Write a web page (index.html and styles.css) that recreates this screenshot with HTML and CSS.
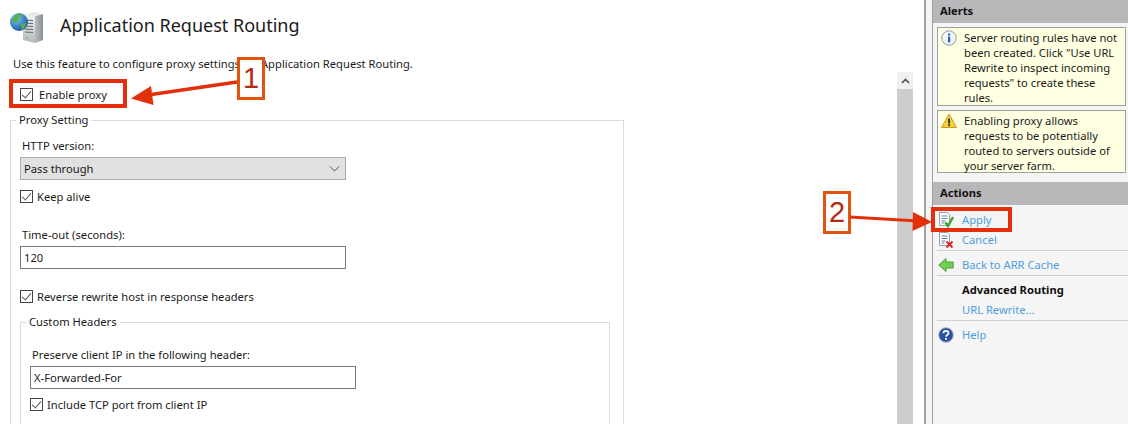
FILE: index.html
```html
<!DOCTYPE html>
<html lang="en">
<head>
    <meta charset="UTF-8">
    <meta name="viewport" content="width=device-width, initial-scale=1.0">
    <title>Application Request Routing</title>
    <link rel="stylesheet" href="styles.css">
</head>
<body>
    <div class="window">
        <main class="main">
            <div class="content">
                <div class="page-head">
                    <svg class="page-icon" width="36" height="36" viewBox="0 0 36 36">
                        <defs>
                            <linearGradient id="tower" x1="0" x2="1" y1="0" y2="0">
                                <stop offset="0" stop-color="#b9bdc0"/>
                                <stop offset="1" stop-color="#8a8f93"/>
                            </linearGradient>
                            <linearGradient id="front" x1="0" x2="0" y1="0" y2="1">
                                <stop offset="0" stop-color="#f2f3f3"/>
                                <stop offset="1" stop-color="#b4b8ba"/>
                            </linearGradient>
                            <radialGradient id="globe" cx="0.35" cy="0.3" r="0.8">
                                <stop offset="0" stop-color="#7fc8f5"/>
                                <stop offset="1" stop-color="#0f4f9e"/>
                            </radialGradient>
                        </defs>
                        <path d="M26 8l8-2v26l-8 3z" fill="url(#tower)"/>
                        <path d="M14 7l12 1v27l-12-3z" fill="url(#front)"/>
                        <path d="M14 7l12-3 8 2-8 2z" fill="#e6e8e9"/>
                        <path d="M16 12l8 .5M16 15l8 .5M16 18l8 .5M16 21l8 .5M16 24l8 .5" stroke="#5f6568" stroke-width="1"/>
                        <circle cx="18" cy="30" r="1" fill="#6fc04a"/>
                        <circle cx="10" cy="14" r="9" fill="url(#globe)"/>
                        <path d="M4 10c2-3 6-5 9-4l-1 3-3 1 1 3-4 2-3-2zM12 16l5-1-1 4-3 3z" fill="#58b04a"/>
                    </svg>
                    <h1 class="page-title">Application Request Routing</h1>
                </div>
                <p class="intro">Use this feature to configure proxy settings for Application Request Routing.</p>
                <label class="check check-top"><span class="box"></span>Enable proxy</label>

                <fieldset class="group">
                    <legend>Proxy Setting</legend>
                    <div class="field-label first">HTTP version:</div>
                    <div class="select">
                        <span>Pass through</span>
                        <svg width="11" height="6" viewBox="0 0 11 6"><path d="M1 .5l4.5 4.5L10 .5" fill="none" stroke="#555" stroke-width="1"/></svg>
                    </div>
                    <label class="check keep"><span class="box"></span>Keep alive</label>
                    <div class="field-label timeout">Time-out (seconds):</div>
                    <div class="input">120</div>
                    <label class="check reverse"><span class="box"></span>Reverse rewrite host in response headers</label>

                    <fieldset class="group inner">
                        <legend>Custom Headers</legend>
                        <div class="field-label first">Preserve client IP in the following header:</div>
                        <div class="input">X-Forwarded-For</div>
                        <label class="check keep"><span class="box"></span>Include TCP port from client IP</label>
                    </fieldset>
                </fieldset>
            </div>
            <div class="scrollbar">
                <div class="scroll-up">
                    <svg width="9" height="6" viewBox="0 0 9 6"><path d="M1 5l3.500-3.500L8 5" fill="none" stroke="#505050" stroke-width="1.600"/></svg>
                </div>
            </div>
        </main>

        <aside class="side">
            <div class="side-head">Alerts</div>
            <div class="alert alert-info">
                <svg width="16" height="16" viewBox="0 0 16 16">
                    <circle cx="8" cy="8" r="7.200" fill="#f4f6fa" stroke="#8f9aa8"/>
                    <rect x="7" y="6.500" width="2.200" height="6" fill="#2b5fc0"/>
                    <rect x="7" y="3.500" width="2.200" height="2" fill="#2b5fc0"/>
                </svg>
                <span>Server routing rules have not been created. Click "Use URL Rewrite to inspect incoming requests" to create these rules.</span>
            </div>
            <div class="alert alert-warn">
                <svg width="16" height="16" viewBox="0 0 16 16">
                    <path d="M8 1l7.500 13.500H.500z" fill="#f7d13c" stroke="#c79a1a"/>
                    <rect x="7.200" y="5.500" width="1.700" height="5" fill="#222"/>
                    <rect x="7.200" y="11.300" width="1.700" height="1.800" fill="#222"/>
                </svg>
                <span>Enabling proxy allows requests to be potentially routed to servers outside of your server farm.</span>
            </div>

            <div class="side-head actions-head">Actions</div>
            <ul class="actions">
                <li class="action first-action">
                    <svg width="16" height="16" viewBox="0 0 16 16">
                        <path d="M1.500 .5h8l2 2v11h-10z" fill="#fff" stroke="#9aa0a6"/>
                        <path d="M3.500 4h6M3.500 6.500h6M3.500 9h4M3.500 11h3" stroke="#5e86b5"/>
                        <path d="M7.500 10.500l2.500 3.500 5-9" fill="none" stroke="#3aa52c" stroke-width="2.400"/>
                    </svg>
                    <a>Apply</a>
                </li>
                <li class="action rule">
                    <svg width="16" height="16" viewBox="0 0 16 16">
                        <path d="M1.500 .5h8l2 2v11h-10z" fill="#fff" stroke="#9aa0a6"/>
                        <path d="M3.500 4h6M3.500 6.500h6M3.500 9h4M3.500 11h3" stroke="#5e86b5"/>
                        <path d="M8.500 9.500l6 6M14.500 9.500l-6 6" stroke="#d9252a" stroke-width="2"/>
                    </svg>
                    <a>Cancel</a>
                </li>
                <li class="action rule">
                    <svg width="16" height="16" viewBox="0 0 16 16">
                        <path d="M.8 8L8 1.500v3.500h7.200v6H8v3.500z" fill="#6fd04f" stroke="#4b9f3a"/>
                    </svg>
                    <a>Back to ARR Cache</a>
                </li>
                <li class="action-title">Advanced Routing</li>
                <li class="action rule no-icon"><a>URL Rewrite...</a></li>
                <li class="action">
                    <svg width="16" height="16" viewBox="0 0 16 16">
                        <circle cx="8" cy="8" r="7.300" fill="#2a50a8" stroke="#a9b3c4"/>
                        <path d="M5.500 6.200c0-3 5-3 5 0 0 1.800-2.500 1.800-2.500 3.600" fill="none" stroke="#fff" stroke-width="1.700"/>
                        <rect x="7.100" y="11" width="1.800" height="1.800" fill="#fff"/>
                    </svg>
                    <a>Help</a>
                </li>
            </ul>
        </aside>
    </div>

    <!-- Annotations drawn over the screenshot -->
    <div class="mark mark-proxy"></div>
    <div class="mark mark-apply"></div>
    <div class="num num-one">1</div>
    <div class="num num-two">2</div>
    <svg class="arrows" width="1128" height="424" viewBox="0 0 1128 424">
        <path d="M237 82L148 95" stroke="#e4300a" stroke-width="3.500"/>
        <path d="M131 98.500L151 86l2.500 19z" fill="#e4300a"/>
        <path d="M850 217L918 221" stroke="#e4300a" stroke-width="3"/>
        <path d="M932 222L913 212l-.5 19z" fill="#e4300a"/>
    </svg>
</body>
</html>
```

FILE: styles.css
```css
html, body {
    margin: 0;
    padding: 0;
    height: 424px;
    overflow: hidden;
}

body {
    font-family: "Noto Sans", Arial, sans-serif;
    font-size: 11.2px;
    color: #1a1a1a;
    background: #fff;
}

.window {
    display: flex;
    height: 424px;
}

.main {
    display: flex;
    flex-shrink: 0;
    width: 924px;
    border-right: 2px solid #a0a0a0;
}

.content {
    width: 897px;
    height: 424px;
    padding-top: 8px;
    padding-left: 10px;
    box-sizing: border-box;
    overflow: hidden;
}

.page-head {
    display: flex;
    align-items: center;
    height: 36px;
}

.page-icon {
    margin-left: -1px;
}

.page-title {
    margin: 0 0 2px 15px;
    font-size: 18px;
    font-weight: normal;
    color: #1b1b1b;
}

.intro {
    margin: 11px 0 0 3px;
    line-height: 17px;
    white-space: nowrap;
}

.check {
    display: flex;
    align-items: center;
    line-height: 17px;
}

.box {
    width: 11px;
    height: 11px;
    margin-right: 4px;
    border: 1px solid #444;
    background: #fff;
    position: relative;
}

.box::after {
    content: "";
    position: absolute;
    left: 3px;
    top: 0;
    width: 4px;
    height: 8px;
    border-right: 1px solid #555;
    border-bottom: 1px solid #555;
    transform: rotate(40deg);
}

.check-top {
    margin: 14px 0 0 10px;
}

.check-top .box {
    margin-right: 6px;
}

.group {
    width: 614px;
    margin: 8px 0 0 0;
    padding: 0 0 0 9px;
    border: 1px solid #dcdcdc;
    box-sizing: border-box;
    min-inline-size: 0;
}

.group legend {
    margin-left: -4px;
    padding: 0 3px 2px;
    line-height: 17px;
}

.field-label {
    margin-left: 2px;
    line-height: 17px;
}

.field-label.first {
    margin-top: 7px;
}

.select, .input {
    display: flex;
    align-items: center;
    width: 326px;
    height: 23px;
    box-sizing: border-box;
    padding: 0 3px;
}

.select {
    justify-content: space-between;
    margin-top: 3px;
    padding-right: 5px;
    background: #e1e1e1;
    border: 1px solid #adadad;
}

.input {
    margin-top: 3px;
    background: #fff;
    border: 1px solid #7a7a7a;
}

.keep {
    margin-top: 8px;
}

.timeout {
    margin-top: 21px;
}

.reverse {
    margin-top: 19px;
}

.group.inner {
    width: 590px;
    height: 200px;
    margin: 8px 0 0 0;
}

.inner .field-label.first {
    margin-top: 14px;
}

.inner .keep {
    margin-top: 7px;
}

.scrollbar {
    width: 16px;
    margin-top: 72px;
    background: #cdcdcd;
}

.scroll-up {
    display: flex;
    align-items: center;
    justify-content: center;
    height: 17px;
    background: #f0f0f0;
}

.side {
    flex: 1;
    margin-left: 6px;
    border-left: 1px solid #a0a0a0;
    background: #f5f5f5;
    box-shadow: -6px 0 0 #f5f5f5;
}

.side-head {
    height: 23px;
    padding-left: 7px;
    line-height: 21px;
    font-weight: bold;
    color: #111;
    background: #b9b7b9;
}

.alert {
    display: flex;
    gap: 7px;
    width: 189px;
    margin: 4px 0 0 4px;
    padding: 2px 3px 0 3px;
    box-sizing: border-box;
    line-height: 15px;
    background: #ffffe1;
    border: 1px solid #a0a0a0;
}

.alert svg {
    flex-shrink: 0;
}

.alert-info {
    height: 79px;
}

.alert-warn {
    height: 63px;
}

.actions-head {
    margin-top: 9px;
}

.actions {
    list-style: none;
    margin: 0;
    padding: 0 0 0 5px;
}

.action {
    display: flex;
    align-items: center;
    gap: 8px;
    height: 20px;
}

.first-action {
    margin-top: 5px;
}

.action a {
    margin-bottom: 2px;
    color: #4d9ee0;
}

.action.rule {
    margin-left: -1px;
    padding-left: 1px;
    border-bottom: 1px solid #d0d0d0;
}

.action.rule + .action,
.action.rule + .action-title {
    margin-top: 4px;
}

.no-icon {
    padding-left: 25px !important;
}

.action-title {
    padding-left: 24px;
    line-height: 20px;
    font-weight: bold;
    color: #111;
}

.mark {
    position: absolute;
    box-sizing: border-box;
    border: 4px solid #e4300a;
}

.mark-proxy {
    left: 9px;
    top: 79px;
    width: 118px;
    height: 29px;
}

.mark-apply {
    left: 931px;
    top: 207px;
    width: 81px;
    height: 25px;
}

.num {
    position: absolute;
    box-sizing: border-box;
    width: 28px;
    height: 43px;
    border: 3px solid #e0540f;
    background: #fff;
    color: #b32a10;
    font-family: "Liberation Sans", Arial, sans-serif;
    font-size: 29px;
    line-height: 37px;
    text-align: center;
}

.num-one {
    left: 237px;
    top: 57px;
}

.num-two {
    left: 823px;
    top: 191px;
}

.arrows {
    position: absolute;
    left: 0;
    top: 0;
    pointer-events: none;
}
```
